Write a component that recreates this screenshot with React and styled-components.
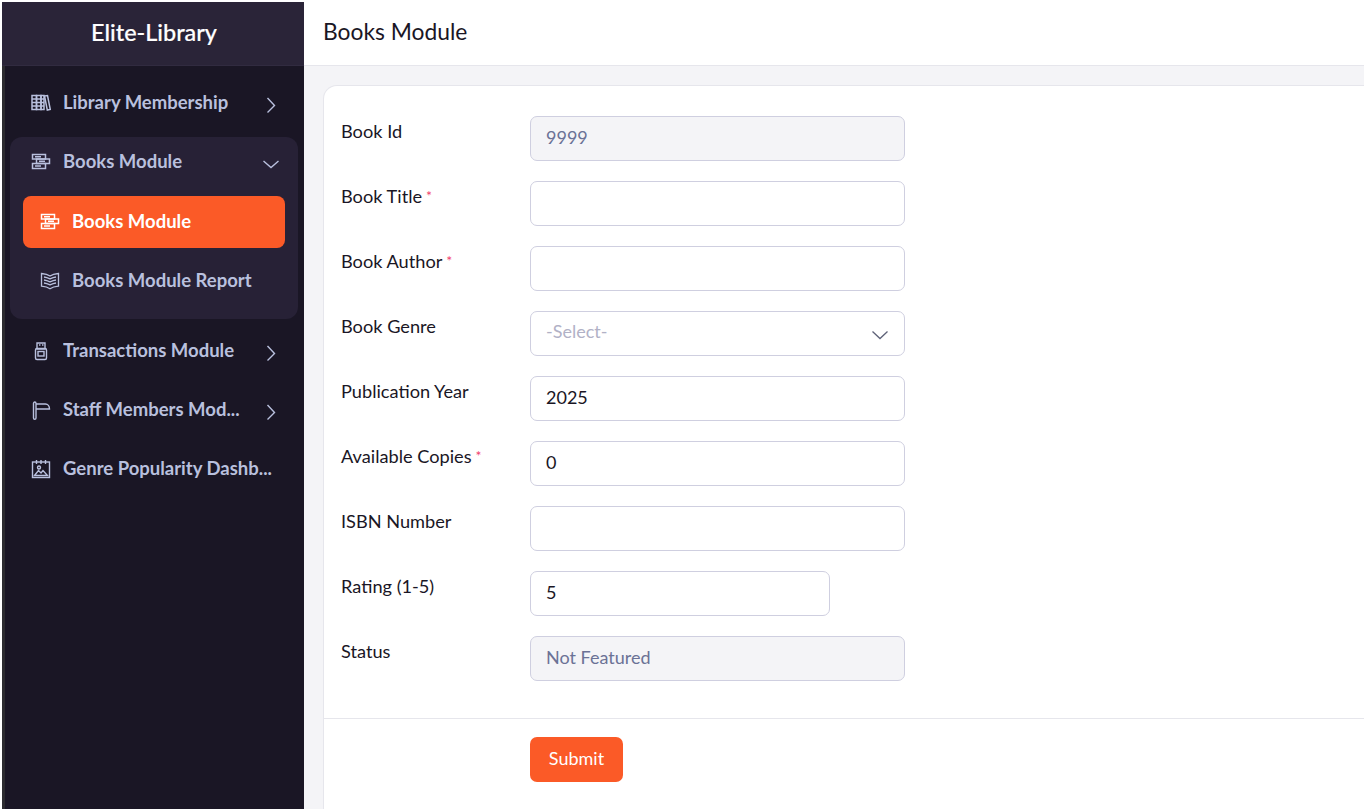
import React from "react";
import styled, { createGlobalStyle } from "styled-components";

const GlobalStyle = createGlobalStyle`
  html, body {
    margin: 0;
    padding: 0;
    height: 100%;
    background: #fff;
    overflow: hidden;
  }
  #root {
    height: 100%;
  }
  * {
    box-sizing: border-box;
  }
`;

const Frame = styled.div`
  display: flex;
  width: 1366px;
  height: 811px;
  padding: 2px;
  background: #fff;
  font-family: Lato, "Open Sans", sans-serif;
`;

const Sidebar = styled.aside`
  width: 302px;
  flex: none;
  display: flex;
  flex-direction: column;
`;

const Brand = styled.div`
  height: 64px;
  flex: none;
  background: #2a2438;
  border-bottom: 1px solid #312b40;
  color: #fff;
  font-size: 23.4px;
  font-weight: 500;
  line-height: 60px;
  padding-left: 2px;
  text-align: center;
  -webkit-text-stroke: 0.2px #fff;
`;

const Menu = styled.nav`
  flex: 1;
  display: flex;
  flex-direction: column;
  padding: 7px 6px 0 5px;
  background: #1a1625;
  border-left: 3px solid #2c2b30;
`;

const Item = styled.div`
  height: 59px;
  display: flex;
  align-items: center;
  padding: 0 19px 0 21px;
  color: #b9c0de;
  svg.icon {
    width: 20px;
    height: 20px;
    flex: none;
    margin-right: 12px;
  }
`;

const Group = styled.div`
  background: #272136;
  border-radius: 12px;
  height: 182px;
  margin: 5px 0 2px;
  ${Item} {
    height: 49px;
  }
`;

const SubMenu = styled.div`
  display: flex;
  flex-direction: column;
  padding: 0 13px;
  margin-top: 10px;
`;

const SubItem = styled.div`
  height: ${p => (p.$active ? "52px" : "59px")};
  margin-bottom: ${p => (p.$active ? "3px" : "0")};
  display: flex;
  align-items: center;
  padding-left: 17px;
  border-radius: 8px;
  color: ${p => (p.$active ? "#fff" : "#b9c0de")};
  background: ${p => (p.$active ? "#fb5a27" : "transparent")};
  svg.icon {
    width: 20px;
    height: 20px;
    flex: none;
    margin-right: 12px;
  }
`;

const ItemLabel = styled.span`
  font-size: 18.5px;
  font-weight: 700;
  line-height: 24px;
  flex: 1;
  min-width: 0;
  white-space: nowrap;
  overflow: hidden;
  text-overflow: ellipsis;
  position: relative;
  top: -1px;
`;

const Caret = styled.svg`
  width: 16px;
  height: 16px;
  flex: none;
  margin-left: 10px;
  fill: none;
  stroke: #b9c0de;
  stroke-width: 1.4;
  position: relative;
  top: 2px;
`;

const Main = styled.main`
  flex: 1;
  min-width: 0;
  display: flex;
  flex-direction: column;
  background: #f4f4f7;
  overflow: hidden;
`;

const TopBar = styled.header`
  height: 64px;
  flex: none;
  background: #fff;
  border-bottom: 1px solid #e6e6ec;
  padding-left: 19px;
  font-size: 22.8px;
  line-height: 58px;
  color: #1a1625;
`;

const Card = styled.section`
  flex: 1;
  margin: 19px -20px 0 19px;
  background: #fff;
  border: 1px solid #e6e6ec;
  border-bottom: none;
  border-radius: 14px 14px 0 0;
`;

const Fields = styled.div`
  display: flex;
  flex-direction: column;
  gap: 20px;
  padding: 30px 17px 37px;
  border-bottom: 1px solid #e6e6ec;
`;

const Row = styled.div`
  display: flex;
  align-items: flex-start;
`;

const Label = styled.label`
  width: 189px;
  flex: none;
  font-size: 18.2px;
  line-height: 30px;
  color: #1a1625;
`;

const Required = styled.span`
  color: #f1416c;
  font-size: 14px;
  margin-left: 4px;
  vertical-align: 2px;
`;

const Field = styled.div`
  width: ${p => p.$width || 375}px;
  height: 45px;
  border: 1px solid #cfcfe0;
  border-radius: 7px;
  background: ${p => (p.$readOnly ? "#f4f4f7" : "#fff")};
  color: ${p => (p.$readOnly ? "#6b7296" : "#1a1625")};
  font-size: 18px;
  line-height: 41px;
  padding: 0 15px;
  position: relative;
`;

const Placeholder = styled.span`
  color: #b1b1c6;
  position: relative;
  top: -1px;
`;

const SelectCaret = styled.svg`
  position: absolute;
  right: 15px;
  top: 14px;
  width: 18px;
  height: 18px;
  fill: none;
  stroke: #5e6278;
  stroke-width: 1.3;
`;

const Footer = styled.div`
  padding: 18px 0 0 206px;
`;

const SubmitButton = styled.button`
  width: 93px;
  height: 45px;
  border: none;
  border-radius: 7px;
  background: #fb5a27;
  color: #fff;
  font-family: inherit;
  font-size: 18px;
  padding: 0 0 4px;
`;

const BooksIcon = () => (
  <svg className="icon" viewBox="0 0 20 20" fill="none" stroke="currentColor" strokeWidth="1.5">
    <rect x="1.5" y="2.5" width="13" height="4.5" />
    <rect x="5.5" y="7" width="13" height="4.5" />
    <rect x="1.5" y="11.5" width="13" height="5" />
    <path d="M4 4.7h6M8 9.2h6M4 14h6" />
  </svg>
);

const ShelfIcon = () => (
  <svg className="icon" viewBox="0 0 20 20" fill="none" stroke="currentColor" strokeWidth="1.5">
    <rect x="1" y="2.5" width="4.5" height="14" />
    <rect x="5.500" y="2.500" width="4.500" height="14" />
    <rect x="10" y="2.500" width="3" height="14" />
    <path d="M13.500 3l3-.5 2.800 14-3 .6z" />
    <path d="M1 6h12M1 9.500h12M1 13h12" />
  </svg>
);

const OpenBookIcon = () => (
  <svg className="icon" viewBox="0 0 20 20" fill="none" stroke="currentColor" strokeWidth="1.3">
    <path d="M10 5C8 3.600 5 2.800 1.500 2.500v12.700c3.500.3 6.500 1.200 8.500 2.600 2-1.400 5-2.300 8.500-2.600V2.500C15 2.800 12 3.600 10 5z" />
    <path d="M4 6c1.800.2 3.500.7 6 1.900C12.500 6.700 14.200 6.200 16 6M4 9c1.800.2 3.500.7 6 1.900 2.500-1.200 4.200-1.700 6-1.900M4 12c1.800.2 3.500.7 6 1.900 2.500-1.200 4.200-1.700 6-1.900" />
  </svg>
);

const TransactionIcon = () => (
  <svg className="icon" viewBox="0 0 20 20" fill="none" stroke="currentColor" strokeWidth="1.4">
    <path d="M6 2h8v6H6z" />
    <rect x="4.500" y="7.500" width="11" height="11" rx="1.500" />
    <rect x="7" y="10.500" width="6" height="4.500" />
    <path d="M8 4h1.500M11 4h1.500" />
  </svg>
);

const FlagIcon = () => (
  <svg className="icon" viewBox="0 0 20 20" fill="none" stroke="currentColor" strokeWidth="1.4">
    <path d="M2.500 18V3.500C2.500 2.700 3.100 2 3.800 2S5 2.700 5 3.500V18a1.250 1.250 0 0 1-2.500 0z" />
    <path d="M5 4h9.500c2.200 0 4 2 4 5H5" />
  </svg>
);

const CalendarIcon = () => (
  <svg className="icon" viewBox="0 0 20 20" fill="none" stroke="currentColor" strokeWidth="1.4">
    <rect x="1.500" y="3" width="17" height="15.500" />
    <path d="M5.500 1v4M10 1v4M14.500 1v4" />
    <circle cx="8" cy="8.500" r="1.500" />
    <path d="M3.500 16.500l4-5 2.500 2.500 2-2.500 4.500 5z" />
  </svg>
);

const ChevronRight = () => (
  <Caret viewBox="0 0 16 16">
    <path d="M4.500 1l7 7.500-7 7" />
  </Caret>
);

const ChevronDown = () => (
  <Caret viewBox="0 0 16 16">
    <path d="M0.500 5l7.500 6.500L15.500 5" />
  </Caret>
);

const fields = [
  { label: "Book Id", value: "9999", readOnly: true },
  { label: "Book Title", required: true },
  { label: "Book Author", required: true },
  { label: "Book Genre", select: true },
  { label: "Publication Year", value: "2025" },
  { label: "Available Copies", required: true, value: "0" },
  { label: "ISBN Number" },
  { label: "Rating (1-5)", value: "5", width: 300 },
  { label: "Status", value: "Not Featured", readOnly: true }
];

export default function App() {
  return (
    <Frame>
      <GlobalStyle />
      <Sidebar>
        <Brand>Elite-Library</Brand>
        <Menu>
          <Item>
            <ShelfIcon />
            <ItemLabel>Library Membership</ItemLabel>
            <ChevronRight />
          </Item>
          <Group>
            <Item>
              <BooksIcon />
              <ItemLabel>Books Module</ItemLabel>
              <ChevronDown />
            </Item>
            <SubMenu>
              <SubItem $active>
                <BooksIcon />
                <ItemLabel>Books Module</ItemLabel>
              </SubItem>
              <SubItem>
                <OpenBookIcon />
                <ItemLabel>Books Module Report</ItemLabel>
              </SubItem>
            </SubMenu>
          </Group>
          <Item>
            <TransactionIcon />
            <ItemLabel>Transactions Module</ItemLabel>
            <ChevronRight />
          </Item>
          <Item>
            <FlagIcon />
            <ItemLabel>Staff Members Mod...</ItemLabel>
            <ChevronRight />
          </Item>
          <Item>
            <CalendarIcon />
            <ItemLabel>Genre Popularity Dashb...</ItemLabel>
          </Item>
        </Menu>
      </Sidebar>
      <Main>
        <TopBar>Books Module</TopBar>
        <Card>
          <Fields>
            {fields.map(f => (
              <Row key={f.label}>
                <Label>
                  {f.label}
                  {f.required && <Required>*</Required>}
                </Label>
                <Field $readOnly={f.readOnly} $width={f.width}>
                  {f.select ? <Placeholder>-Select-</Placeholder> : f.value}
                  {f.select && (
                    <SelectCaret viewBox="0 0 18 18">
                      <path d="M1.500 5.500l7.500 7 7.500-7" />
                    </SelectCaret>
                  )}
                </Field>
              </Row>
            ))}
          </Fields>
          <Footer>
            <SubmitButton>Submit</SubmitButton>
          </Footer>
        </Card>
      </Main>
    </Frame>
  );
}
